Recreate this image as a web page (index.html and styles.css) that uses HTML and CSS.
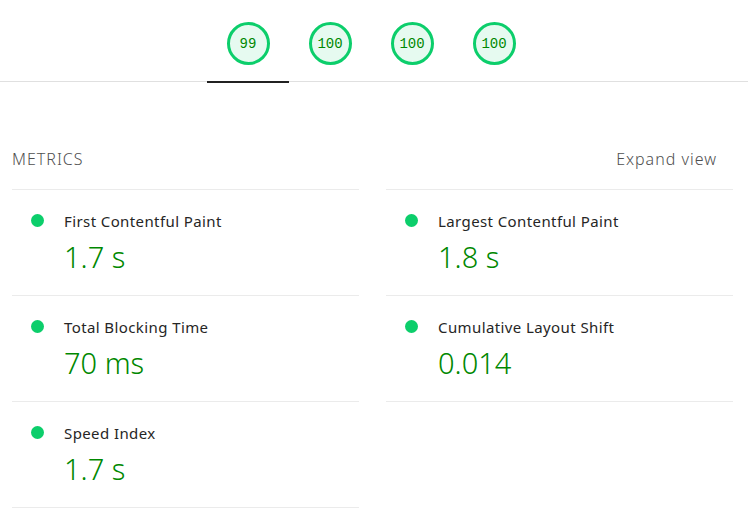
FILE: index.html
```html
<!DOCTYPE html>
<html lang="en">
<head>
<meta charset="utf-8">
<title>Lighthouse report</title>
<link rel="stylesheet" href="styles.css">
</head>
<body>
<nav class="tabs">
  <a class="tab active"><span class="gauge">99</span></a>
  <a class="tab"><span class="gauge">100</span></a>
  <a class="tab"><span class="gauge">100</span></a>
  <a class="tab"><span class="gauge">100</span></a>
</nav>
<section class="metrics">
  <div class="metrics-header">
    <span class="metrics-title">METRICS</span>
    <button class="expand">Expand view</button>
  </div>
  <div class="metrics-grid">
    <div class="metric-col">
      <div class="metric">
        <div class="metric-name"><span class="dot"></span>First Contentful Paint</div>
        <div class="metric-value">1.7 s</div>
      </div>
      <div class="metric">
        <div class="metric-name"><span class="dot"></span>Total Blocking Time</div>
        <div class="metric-value">70 ms</div>
      </div>
      <div class="metric">
        <div class="metric-name"><span class="dot"></span>Speed Index</div>
        <div class="metric-value">1.7 s</div>
      </div>
    </div>
    <div class="metric-col">
      <div class="metric">
        <div class="metric-name"><span class="dot"></span>Largest Contentful Paint</div>
        <div class="metric-value">1.8 s</div>
      </div>
      <div class="metric">
        <div class="metric-name"><span class="dot"></span>Cumulative Layout Shift</div>
        <div class="metric-value">0.014</div>
      </div>
    </div>
  </div>
</section>
</body>
</html>
```

FILE: styles.css
```css
* { box-sizing: border-box; }
html, body { margin: 0; background: #fff; }
body {
  font-family: "Noto Sans", "Open Sans", sans-serif;
  color: #212121;
  overflow: hidden;
}
.tabs {
  display: flex;
  height: 82px;
  padding-left: 207px;
  border-bottom: 1px solid #e0e0e0;
}
.tab {
  width: 82px;
  height: 83px;
  padding-top: 22px;
  display: flex;
  justify-content: center;
  align-items: flex-start;
  border-bottom: 2px solid transparent;
}
.tab.active { border-bottom-color: #212121; }
.gauge {
  width: 43px;
  height: 43px;
  border-radius: 50%;
  border: 3px solid #0cce6b;
  background: #e6faf0;
  color: #008800;
  font-family: "Liberation Mono", "DejaVu Sans Mono", monospace;
  font-size: 14px;
  display: flex;
  align-items: center;
  justify-content: center;
}
.metrics {
  padding: 66px 15px 0 12px;
}
.metrics-header {
  display: flex;
  justify-content: space-between;
  align-items: center;
  height: 22px;
  margin-bottom: 19px;
}
.metrics-title {
  font-size: 16px;
  font-weight: 300;
  letter-spacing: 1px;
  color: #4f4f4f;
}
.expand {
  font-family: inherit;
  font-size: 16px;
  font-weight: 300;
  letter-spacing: 1px;
  color: #4f4f4f;
  background: none;
  border: 0;
  padding: 0 16px 0 0;
}
.metrics-grid {
  display: grid;
  grid-template-columns: 1fr 1fr;
  column-gap: 27px;
}
.metric-col { display: flex; flex-direction: column; }
.metric {
  border-top: 1px solid #ebebeb;
  height: 106px;
  padding: 21px 0 0 52px;
}
.metric:last-child { border-bottom: 1px solid #ebebeb; height: 107px; }
.metric-name {
  position: relative;
  font-size: 15px;
  line-height: 20px;
  letter-spacing: 0.4px;
  color: #262626;
}
.dot {
  position: absolute;
  left: -33px;
  top: 3px;
  width: 13px;
  height: 13px;
  border-radius: 50%;
  background: #0cce6b;
}
.metric-value {
  margin-top: 8px;
  font-size: 29px;
  font-weight: 300;
  line-height: 36px;
  color: #008800;
}
```
